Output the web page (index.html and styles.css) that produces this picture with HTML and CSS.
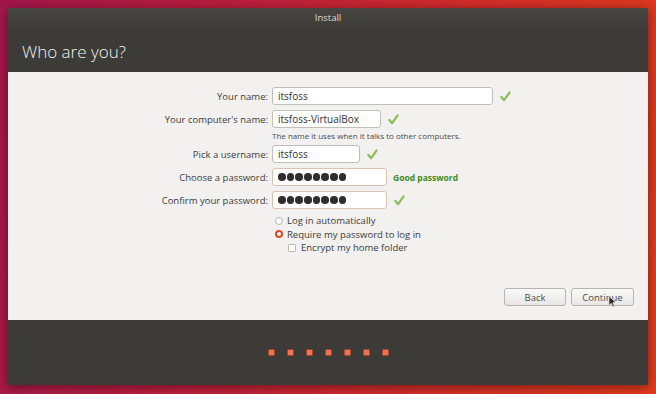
FILE: index.html
```html
<!DOCTYPE html>
<html lang="en">
<head>
    <meta charset="UTF-8">
    <title>Install</title>
    <link rel="stylesheet" href="styles.css">
</head>
<body>

    <div class="janela">
        <div class="barra-titulo">Install</div>
        <div class="cabecalho">
            <h1>Who are you?</h1>
        </div>

        <div class="conteudo">
            <div class="formulario">
                <div class="linha">
                    <label>Your name:</label>
                    <div class="campo largo">itsfoss</div>
                    <svg class="ok" viewBox="0 0 12 12"><path d="M1.5 6.5 L4.5 10 L10.5 1.5" /></svg>
                </div>
                <div class="linha">
                    <label>Your computer's name:</label>
                    <div class="campo medio">itsfoss-VirtualBox</div>
                    <svg class="ok" viewBox="0 0 12 12"><path d="M1.5 6.5 L4.5 10 L10.5 1.5" /></svg>
                </div>
                <p class="dica">The name it uses when it talks to other computers.</p>
                <div class="linha">
                    <label>Pick a username:</label>
                    <div class="campo curto">itsfoss</div>
                    <svg class="ok" viewBox="0 0 12 12"><path d="M1.5 6.5 L4.5 10 L10.5 1.5" /></svg>
                </div>
                <div class="linha">
                    <label>Choose a password:</label>
                    <div class="campo senha">
                        <i></i><i></i><i></i><i></i><i></i><i></i><i></i><i></i>
                    </div>
                    <span class="forca">Good password</span>
                </div>
                <div class="linha">
                    <label>Confirm your password:</label>
                    <div class="campo senha">
                        <i></i><i></i><i></i><i></i><i></i><i></i><i></i><i></i>
                    </div>
                    <svg class="ok" viewBox="0 0 12 12"><path d="M1.5 6.5 L4.5 10 L10.5 1.5" /></svg>
                </div>

                <div class="opcoes">
                    <div class="opcao"><span class="radio"></span>Log in automatically</div>
                    <div class="opcao"><span class="radio marcado"></span>Require my password to log in</div>
                    <div class="opcao sub"><span class="caixa"></span>Encrypt my home folder</div>
                </div>
            </div>

            <div class="botoes">
                <button>Back</button>
                <button class="continuar">Continue
                    <svg class="cursor" viewBox="0 0 10 14"><path d="M1 1 L1 11.5 L3.6 9.2 L5.5 13 L7.2 12.2 L5.4 8.5 L8.8 8.3 Z" /></svg>
                </button>
            </div>
        </div>

        <div class="rodape">
            <span class="ponto"></span>
            <span class="ponto"></span>
            <span class="ponto"></span>
            <span class="ponto"></span>
            <span class="ponto"></span>
            <span class="ponto"></span>
            <span class="ponto"></span>
        </div>
    </div>

</body>
</html>
```

FILE: styles.css
```css
* {
    margin: 0;
    padding: 0;
    box-sizing: border-box;
}

body {
    width: 656px;
    height: 394px;
    overflow: hidden;
    background: linear-gradient(100deg, #a2174a 0%, #b91d3f 30%, #cf2a2c 60%, #e13b1c 100%);
    font-family: 'Open Sans', sans-serif;
    padding: 8px 8px 0 8px;
}

.janela {
    width: 640px;
    height: 377px;
    display: flex;
    flex-direction: column;
    background: #3c3b37;
    box-shadow: 0 2px 10px rgba(0, 0, 0, 0.45);
}

.barra-titulo {
    height: 20px;
    line-height: 19px;
    text-align: center;
    color: #dfdbd2;
    font-size: 9.5px;
    background: linear-gradient(#474642, #3e3d39);
}

.cabecalho {
    height: 44px;
    padding: 12px 0 0 14px;
}

.cabecalho h1 {
    font-size: 17px;
    font-weight: 300;
    color: #f2f1ef;
}

/* area branca */
.conteudo {
    height: 248px;
    background: #f2f1f0;
    display: flex;
    flex-direction: column;
    padding: 15px 14px 14px 0;
    color: #3c3c3c;
    font-size: 9.5px;
}

.linha {
    display: flex;
    align-items: center;
    height: 18px;
    margin-bottom: 5px;
}

.linha label {
    width: 264px;
    text-align: right;
    padding-right: 4px;
}

.campo {
    height: 18px;
    line-height: 16px;
    border: 1px solid #c3bfb8;
    border-radius: 3px;
    background: #fff;
    padding-left: 5px;
    color: #333;
    font-size: 10px;
}

.largo { width: 221px; }
.medio { width: 109px; }
.curto { width: 88px; }

.senha {
    width: 115px;
    border-color: #dcc2b5;
    display: flex;
    align-items: center;
    gap: 1.2px;
}

.senha i {
    width: 7.5px;
    height: 7.5px;
    border-radius: 50%;
    background: #2e2e2e;
}

.ok {
    width: 11px;
    height: 11px;
    margin-left: 7px;
    fill: none;
    stroke: #8cbd55;
    stroke-width: 2.4;
    stroke-linecap: round;
    stroke-linejoin: round;
}

.forca {
    margin-left: 6px;
    color: #3f8b22;
    font-weight: bold;
    font-size: 8.5px;
}

.dica {
    padding-left: 264px;
    font-size: 8px;
    margin: -4px 0 3px 0;
    line-height: 13px;
    color: #4a4a4a;
}

.opcoes {
    padding-left: 267px;
    margin-top: 0;
}

.opcao {
    display: flex;
    align-items: center;
    height: 13.5px;
    font-size: 9.5px;
}

.opcao.sub {
    padding-left: 13px;
}

.radio {
    width: 8px;
    height: 8px;
    border-radius: 50%;
    border: 1px solid #b9b5ae;
    background: #fff;
    margin-right: 4px;
}

.radio.marcado {
    background: #fff;
    border: 2.5px solid #dd4a22;
}

.caixa {
    width: 8px;
    height: 8px;
    border: 1px solid #bdb9b2;
    border-radius: 1px;
    background: #fff;
    margin-right: 5px;
}

.botoes {
    margin-top: auto;
    display: flex;
    justify-content: flex-end;
    gap: 5px;
}

button {
    position: relative;
    width: 62px;
    height: 18px;
    border: 1px solid #b8b3ab;
    border-radius: 3px;
    background: linear-gradient(#fafafa, #e9e7e4);
    color: #4c4c4c;
    font-family: 'Open Sans', sans-serif;
    font-size: 9.5px;
}

.continuar {
    width: 63px;
}

.cursor {
    position: absolute;
    left: 36px;
    top: 6px;
    width: 9px;
    height: 13px;
    fill: #2b2b2b;
    stroke: #f5f5f5;
    stroke-width: 0.8;
}

/* rodape com os pontos */
.rodape {
    flex: 1;
    display: flex;
    justify-content: center;
    align-items: center;
    gap: 12px;
    padding-bottom: 1px;
}

.ponto {
    width: 7px;
    height: 7px;
    border-radius: 1.5px;
    background: #ec7550;
    border: 1px solid #a9432a;
}
```
